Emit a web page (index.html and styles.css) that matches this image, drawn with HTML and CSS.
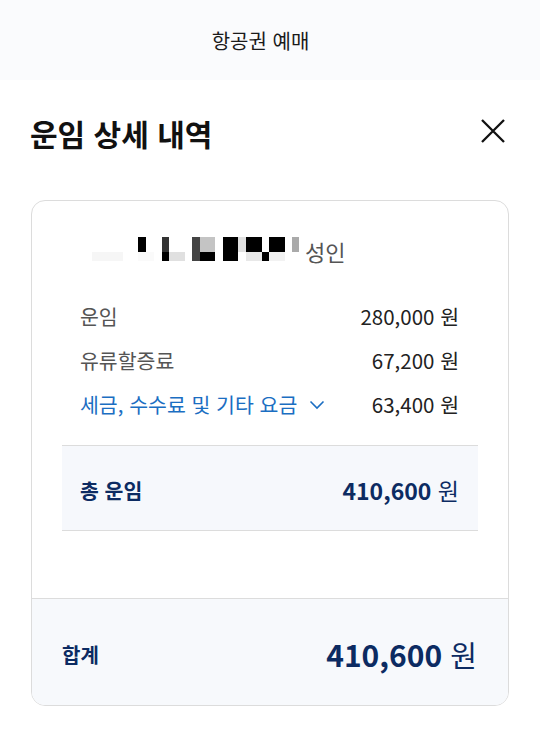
FILE: index.html
```html
<!DOCTYPE html>
<html lang="ko">
<head>
<meta charset="utf-8">
<link rel="stylesheet" href="styles.css">
</head>
<body>
<div class="topbar"><span class="topbar-title">항공권 예매</span></div>
<div class="header">
  <h1 class="title">운임 상세 내역</h1>
  <svg class="close" width="26" height="26" viewBox="0 0 26 26"><path d="M2 2 L24 24 M24 2 L2 24" stroke="#111" stroke-width="2.3" fill="none"/></svg>
</div>
<div class="card">
  <div class="name-row">
    <svg class="mask" width="208" height="24" viewBox="0 0 208 24">
      <rect x="0" y="15" width="31" height="9" fill="#f6f6f6"/>
      <rect x="46" y="0" width="8" height="15" fill="#000"/>
      <rect x="46" y="15" width="16" height="9" fill="#fafafa"/>
      <rect x="70" y="0" width="7" height="15" fill="#333"/>
      <rect x="70" y="15" width="7" height="9" fill="#000"/>
      <rect x="77" y="15" width="16" height="9" fill="#e0e0e0"/>
      <rect x="100" y="0" width="8" height="24" fill="#444"/>
      <rect x="108" y="0" width="15" height="15" fill="#c4c4c4"/>
      <rect x="108" y="15" width="15" height="9" fill="#000"/>
      <rect x="131" y="0" width="15" height="24" fill="#000"/>
      <rect x="146" y="0" width="8" height="15" fill="#e0e0e0"/>
      <rect x="154" y="0" width="16" height="15" fill="#000"/>
      <rect x="154" y="15" width="16" height="9" fill="#e8e8e8"/>
      <rect x="170" y="15" width="7" height="9" fill="#000"/>
      <rect x="177" y="0" width="16" height="15" fill="#000"/>
      <rect x="177" y="15" width="16" height="9" fill="#f2f2f2"/>
      <rect x="200" y="0" width="7" height="15" fill="#aaa"/>
    </svg>
    <span class="pax">성인</span>
  </div>
  <div class="rows">
    <div class="row"><span class="label">운임</span><span class="amt">280,000 원</span></div>
    <div class="row"><span class="label">유류할증료</span><span class="amt">67,200 원</span></div>
    <div class="row"><span class="label link">세금, 수수료 및 기타 요금<svg class="chev" width="16" height="10" viewBox="0 0 16 10"><path d="M1.5 1.5 L8 8 L14.5 1.5" stroke="#1b6ec2" stroke-width="1.6" fill="none"/></svg></span><span class="amt">63,400 원</span></div>
  </div>
  <div class="subtotal">
    <span class="sub-label">총 운임</span>
    <span class="sub-amt"><b>410,600</b> 원</span>
  </div>
  <div class="footer">
    <span class="sum-label">합계</span>
    <span class="sum-amt"><b>410,600</b> 원</span>
  </div>
</div>
</body>
</html>
```

FILE: styles.css
```css
* { box-sizing: border-box; }
body {
  margin: 0;
  font-family: "Noto Sans CJK KR", "Noto Sans", sans-serif;
  background: #fff;
  color: #222;
}
.topbar {
  height: 80px;
  background: #fafbfd;
  display: flex;
  align-items: center;
  justify-content: center;
  padding-right: 19px;
}
.topbar-title {
  font-size: 20px;
  color: #1a1a1a;
}
.header {
  display: flex;
  align-items: center;
  justify-content: space-between;
  height: 40px;
  margin-top: 33px;
  padding: 0 34px 0 30px;
}
.title {
  margin: 0;
  font-size: 30px;
  font-weight: 700;
  color: #111;
  line-height: 40px;
}
.close { display: block; margin-top: -4px; }
.card {
  margin: 47px 31px 0 31px;
  border: 1px solid #dcdcdc;
  border-radius: 14px;
  overflow: hidden;
  background: #fff;
}
.name-row {
  display: flex;
  align-items: center;
  height: 24px;
  margin-top: 36px;
  padding-left: 60px;
}
.mask { display: block; flex: none; }
.pax {
  margin-left: 5px;
  font-size: 22px;
  color: #555;
  line-height: 24px;
  margin-top: 4px;
}
.rows {
  margin-top: 33px;
  padding: 0 49px 0 48px;
}
.row {
  display: flex;
  justify-content: space-between;
  align-items: center;
  height: 44px;
  font-size: 20.5px;
}
.label { color: #555; display: flex; align-items: center; }
.link { color: #1b6ec2; }
.chev { margin-left: 12px; margin-top: 2px; }
.amt { color: #222; }
.subtotal {
  margin: 19px 30px 0 30px;
  height: 86px;
  background: #f6f8fc;
  border-top: 1px solid #dcdcdc;
  border-bottom: 1px solid #dcdcdc;
  display: flex;
  align-items: center;
  justify-content: space-between;
  padding: 4px 19px 0 18px;
  color: #0c2b62;
}
.sub-label { font-size: 20.5px; font-weight: 700; }
.sub-amt { font-size: 23px; }
.sub-amt b { font-weight: 700; }
.footer {
  margin-top: 67px;
  height: 107px;
  background: #f7f9fc;
  border-top: 1px solid #dcdcdc;
  display: flex;
  align-items: center;
  justify-content: space-between;
  padding: 4px 31px 0 30px;
  color: #0c2b62;
}
.sum-label { font-size: 20px; font-weight: 700; }
.sum-amt { font-size: 29px; }
.sum-amt b { font-weight: 700; font-size: 30px; }
```
